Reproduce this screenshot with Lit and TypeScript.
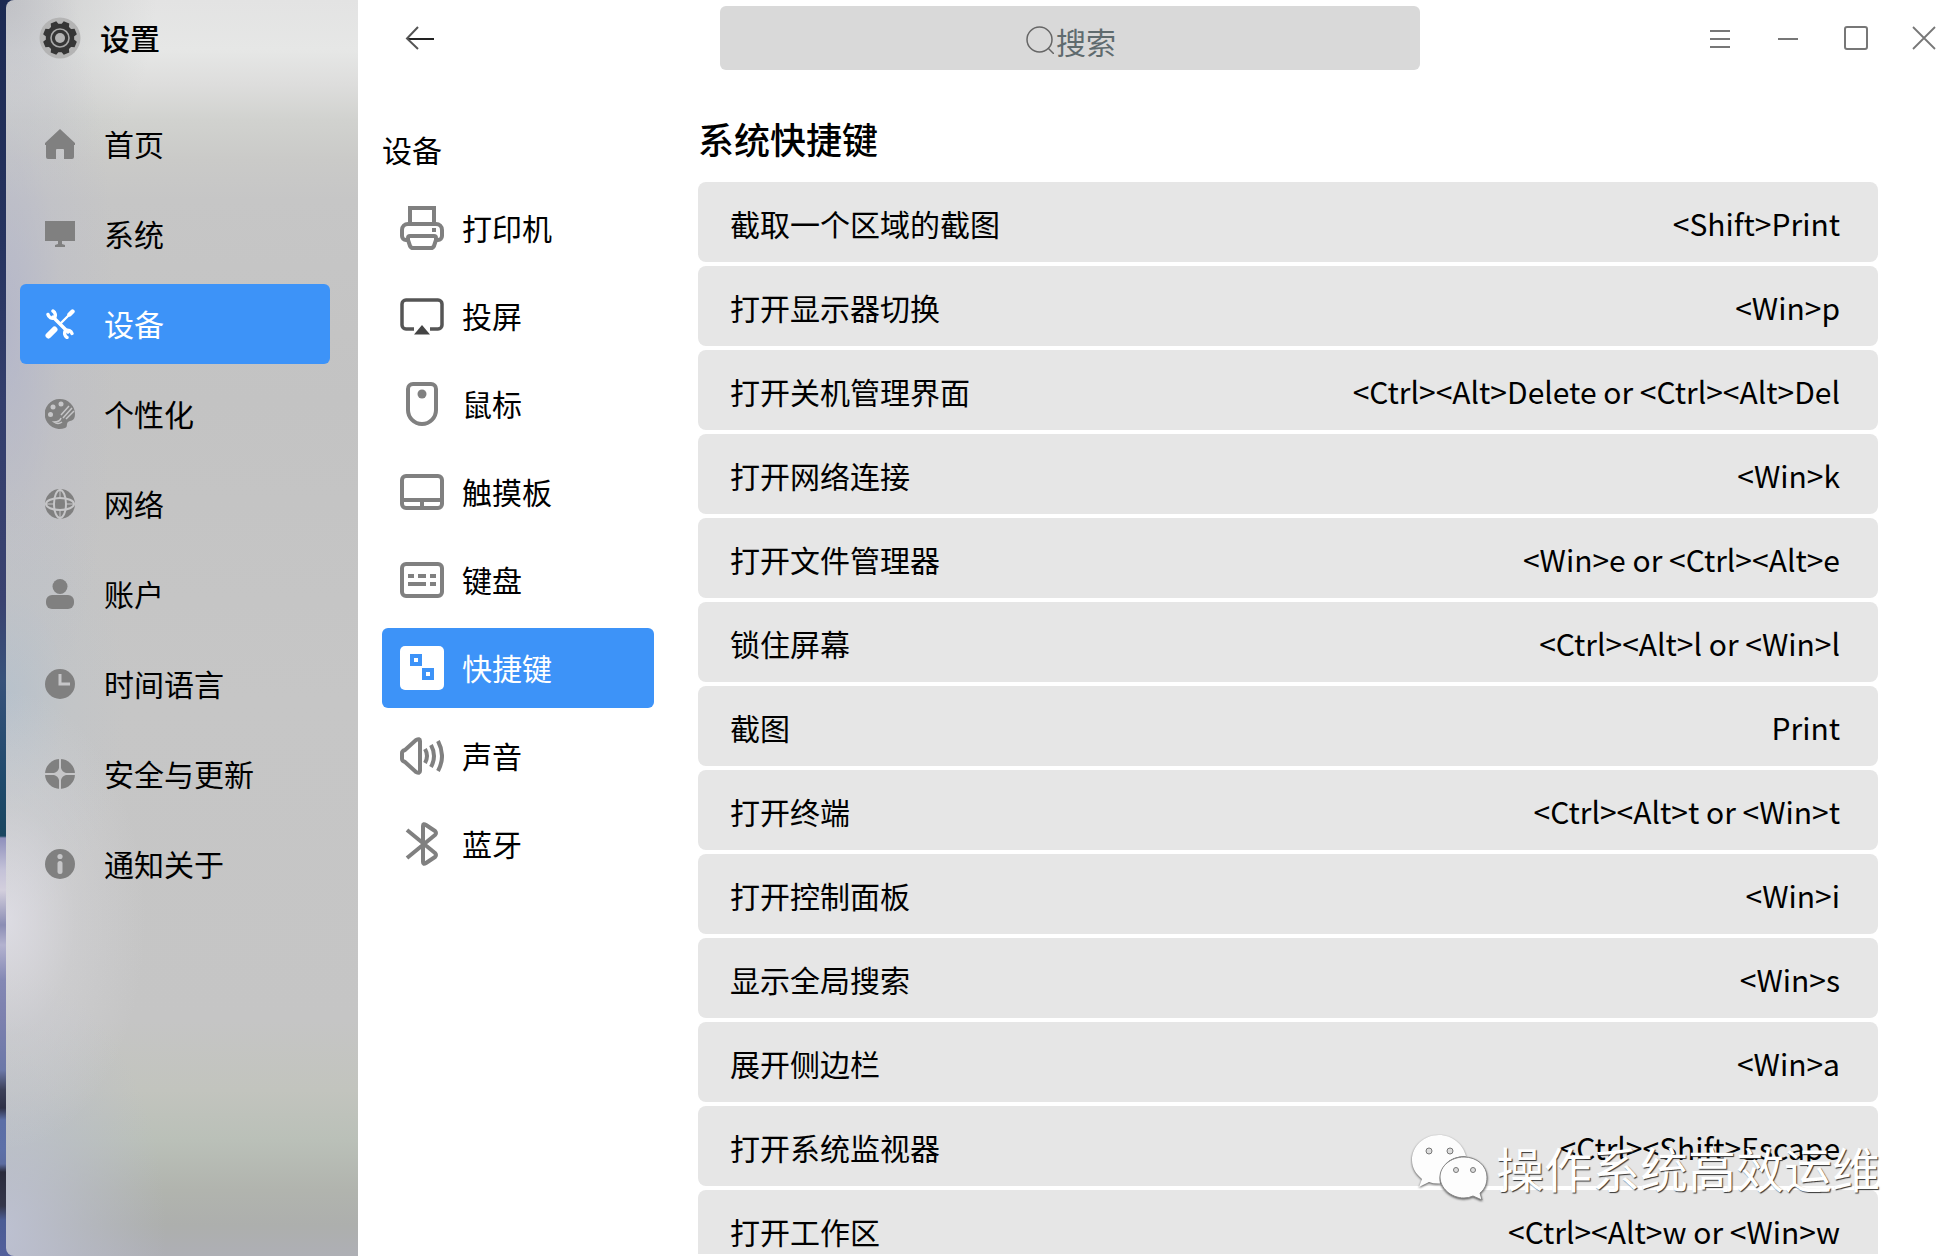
import { LitElement, html, css, svg, nothing, type TemplateResult } from "lit";
import { customElement, property } from "lit/decorators.js";
import { classMap } from "lit/directives/class-map.js";

interface NavItem {
  label: string;
  icon: TemplateResult;
  active?: boolean;
}

const categories: NavItem[] = [
  {
    label: "首页",
    icon: svg`<path fill="currentColor" d="M15 0 30 14v2h-1v12a2 2 0 0 1-2 2h-8v-9a1 1 0 0 0-1-1h-6a1 1 0 0 0-1 1v9H3a2 2 0 0 1-2-2V16H0v-2z"/>`,
  },
  {
    label: "系统",
    icon: svg`<path fill="currentColor" d="M0 2h30v20H0zM13 22h4v3l3 1v2H10v-2l3-1z"/>`,
  },
  {
    label: "设备",
    active: true,
    icon: svg`<g fill="none" stroke="currentColor" stroke-linecap="round">
      <path stroke-width="3.4" d="M8 8 23 23"/>
      <path stroke-width="3.400" d="M3 5.500a5 5 0 0 0 6.500 3.500a5 5 0 0 0-1.500-7"/>
      <path stroke-width="3.400" d="M27 24.500a5 5 0 0 0-6.500-3a5 5 0 0 0 1.500 7"/>
      <path stroke-width="2.400" d="M15 15 26 4"/>
      <path stroke-width="4.400" d="M24.500 5.500 27.500 2.500"/>
      <path stroke-width="6" d="M3.500 26.500 9.500 20.500"/>
    </g>`,
  },
  {
    label: "个性化",
    icon: svg`<path fill="currentColor" d="M15 0a15 15 0 1 0 5 29c3-1 1-4 3-6s7 0 7-8A15 15 0 0 0 15 0z"/>
      <g class="cut"><circle cx="8" cy="8" r="2.500"/><circle cx="16" cy="5" r="2.500"/><circle cx="5.500" cy="15.500" r="2.500"/></g>
      <g class="cutline thin"><path d="M24 7 16 16M27 9 18 19M29 12 21 20"/><path d="M16 19q-1 4-7 4q4 3 8 0"/></g>`,
  },
  {
    label: "网络",
    icon: svg`<circle cx="15" cy="15" r="15" fill="currentColor"/>
      <g class="cutline"><path d="M0 15h10M20 15h10M15 0v10M15 20v10" class="faint"/><ellipse cx="15" cy="15" rx="14" ry="6"/><ellipse cx="15" cy="15" rx="6" ry="14"/></g>
      <path fill="currentColor" d="M11 11h8v8h-8z"/>`,
  },
  {
    label: "账户",
    icon: svg`<circle cx="15" cy="7.500" r="7.500" fill="currentColor"/><rect x="1" y="16" width="28" height="14" rx="6" fill="currentColor"/>`,
  },
  {
    label: "时间语言",
    icon: svg`<circle cx="15" cy="15" r="15" fill="currentColor"/><path class="cutline wide" d="M15 5v10h10"/>`,
  },
  {
    label: "安全与更新",
    icon: svg`<circle cx="15" cy="15" r="15" fill="currentColor"/><path class="cut" d="M14 0h2v9q1 4 5 5h9v2h-9q-4 1-5 5v9h-2v-9q-1-4-5-5H0v-2h9q4-1 5-5z"/>`,
  },
  {
    label: "通知关于",
    icon: svg`<circle cx="15" cy="15" r="15" fill="currentColor"/><g class="cut"><circle cx="15" cy="7.500" r="2.600"/><rect x="12.500" y="12" width="5" height="13" rx="2.500"/></g>`,
  },
];

const devices: NavItem[] = [
  {
    label: "打印机",
    icon: svg`<g fill="none" stroke="currentColor" stroke-width="4">
      <path d="M10 17V2h24v15"/>
      <path d="M8 34H6a4 4 0 0 1-4-4v-6a6 6 0 0 1 6-6h28a6 6 0 0 1 6 6v6a4 4 0 0 1-4 4h-2"/>
      <path d="M8 33v-1q0-2 2-2h24q2 0 2 2v2l-2 6q-1 2-3 2H13q-2 0-3-2l-2-6z"/></g>
      <path fill="currentColor" d="M32 22h4v4h-4z"/>`,
  },
  {
    label: "投屏",
    icon: svg`<path fill="none" stroke="#555" stroke-width="3.500" d="M14 35H6a4 4 0 0 1-4-4V10a4 4 0 0 1 4-4h32a4 4 0 0 1 4 4v21a4 4 0 0 1-4 4h-8"/><path fill="#444" d="M22 31l8 9.500H14z"/>`,
  },
  {
    label: "鼠标",
    icon: svg`<path fill="none" stroke="currentColor" stroke-width="4" d="M8 7a5 5 0 0 1 5-5h18a5 5 0 0 1 5 5v21a14 14 0 0 1-28 0z"/><circle cx="22" cy="12" r="4.500" fill="currentColor"/>`,
  },
  {
    label: "触摸板",
    icon: svg`<g fill="none" stroke="currentColor" stroke-width="4"><rect x="2" y="6" width="40" height="32" rx="4"/><path d="M2 30h40M22 30v8"/></g>`,
  },
  {
    label: "键盘",
    icon: svg`<g fill="none" stroke="currentColor" stroke-width="4"><rect x="2" y="6" width="40" height="32" rx="4"/><path d="M8 18h6M18 18h8M30 18h6M8 26h18M30 26h6"/></g>`,
  },
  {
    label: "快捷键",
    active: true,
    icon: svg`<rect width="44" height="44" rx="5" fill="#fff"/><g fill="none" stroke="#3d93f8" stroke-width="4"><path d="M12 10h8v8h-8zM24 24h8v8h-8z"/></g>`,
  },
  {
    label: "声音",
    icon: svg`<g fill="none" stroke="currentColor" stroke-width="4" stroke-linejoin="round">
      <path d="M2 19q0-2 3-3L16 6q4-2 4 1v30q0 3-4 1L5 28q-3-1-3-3z"/>
      <path d="M25 15q4 7 0 14M31 11q6 11 0 22M38 7q8 15 0 30"/></g>`,
  },
  {
    label: "蓝牙",
    icon: svg`<path fill="none" stroke="currentColor" stroke-width="4" stroke-linejoin="round" d="M7 8 35 31q2 2 0 4l-9 6q-3 2-3-1V4q0-3 3-1l9 6q2 2 0 4L7 36"/>`,
  },
];

const shortcuts: [string, string][] = [
  ["截取一个区域的截图", "<Shift>Print"],
  ["打开显示器切换", "<Win>p"],
  ["打开关机管理界面", "<Ctrl><Alt>Delete or <Ctrl><Alt>Del"],
  ["打开网络连接", "<Win>k"],
  ["打开文件管理器", "<Win>e or <Ctrl><Alt>e"],
  ["锁住屏幕", "<Ctrl><Alt>l or <Win>l"],
  ["截图", "Print"],
  ["打开终端", "<Ctrl><Alt>t or <Win>t"],
  ["打开控制面板", "<Win>i"],
  ["显示全局搜索", "<Win>s"],
  ["展开侧边栏", "<Win>a"],
  ["打开系统监视器", "<Ctrl><Shift>Escape"],
  ["打开工作区", "<Ctrl><Alt>w or <Win>w"],
];

/* Vertical list of links, used for both navigation levels. */
@customElement("nav-list")
class NavList extends LitElement {
  @property({ attribute: false }) items: NavItem[] = [];
  @property({ type: Number }) iconSize = 30;
  @property({ reflect: true }) variant = "primary";

  static styles = css`
    :host {
      display: block;
    }
    .list {
      display: flex;
      flex-direction: column;
      gap: 10px;
      margin: 0;
      padding: 0;
      list-style: none;
    }
    .link {
      display: flex;
      align-items: center;
      box-sizing: border-box;
      gap: 29px;
      height: 80px;
      padding-left: 25px;
      border-radius: 6px;
      color: #000;
      text-decoration: none;
      font-size: 30px;
      line-height: 44px;
    }
    .label {
      padding-bottom: 2px;
    }
    .icon {
      flex: none;
      color: #808080;
    }
    .link.active {
      background: #3d93f8;
      color: #fff;
    }
    .active .icon {
      color: #fff;
    }
    :host([variant="secondary"]) .list {
      gap: 8px;
    }
    :host([variant="secondary"]) .link {
      gap: 18px;
      padding-left: 18px;
    }
    .cut {
      fill: #c6c6c8;
    }
    .cutline {
      fill: none;
      stroke: #c6c6c8;
      stroke-width: 2;
    }
    .cutline.wide {
      stroke-width: 3;
    }
    .cutline.thin {
      stroke-width: 1.5;
    }
    .faint {
      stroke-width: 1;
    }
  `;

  render() {
    return html`<ul class="list">
      ${this.items.map(
        (item) => html`<li>
          <a
            class=${classMap({ link: true, active: !!item.active })}
            href="#"
            aria-current=${item.active ? "page" : nothing}
          >
            <svg
              class="icon"
              width=${this.iconSize}
              height=${this.iconSize}
              viewBox="0 0 ${this.iconSize} ${this.iconSize}"
              aria-hidden="true"
            >
              ${item.icon}
            </svg>
            <span class="label">${item.label}</span>
          </a>
        </li>`
      )}
    </ul>`;
  }
}

@customElement("app-root")
class AppRoot extends LitElement {
  static styles = css`
    :host {
      display: block;
      position: relative;
      height: 100vh;
      overflow: hidden;
      background: #fff;
      color: #000;
      font-family: "Noto Sans CJK SC", sans-serif;
      font-size: 30px;
      line-height: 44px;
    }
    .window {
      display: grid;
      grid-template-columns: 358px minmax(0, 1fr);
      height: 100%;
    }
    .desktop {
      display: flex;
      padding-left: 6px;
      background: linear-gradient(
        #1c2a52 0,
        #26335f 240px,
        #333e6c 400px,
        #3a4270 600px,
        #38527a 680px,
        #1f4a6c 780px,
        #1a4660 836px,
        #8f90bc 838px,
        #c4c2d8 870px,
        #d3cfdd 890px,
        #8b8db4 925px,
        #b3b2cf 945px,
        #8488b4 980px,
        #7c80ae 1020px,
        #6c78a8 1070px,
        #3c4058 1090px,
        #2e3046 1108px,
        #5c6fa6 1120px,
        #5d70a8 1150px,
        #5c6ca0 1164px,
        #2a2b3c 1172px,
        #34364a 1206px,
        #4b5c94 1220px,
        #53609c 1256px
      );
    }
    .sidebar {
      box-sizing: border-box;
      flex: 1;
      padding: 16px 28px 0 14px;
      border-radius: 8px 0 0 8px;
      background: radial-gradient(
          140px 230px at 0 920px,
          rgba(226, 225, 234, 0.8),
          rgba(220, 220, 226, 0.3) 50%,
          rgba(210, 210, 214, 0)
        ),
        radial-gradient(
          160px 260px at 0 1230px,
          rgba(190, 194, 212, 0.9),
          rgba(186, 190, 204, 0.55) 50%,
          rgba(180, 184, 196, 0)
        ),
        radial-gradient(
          120px 220px at 0 700px,
          rgba(180, 192, 204, 0.8),
          rgba(186, 194, 202, 0.3) 50%,
          rgba(190, 196, 202, 0)
        ),
        radial-gradient(
          110px 420px at 0 330px,
          rgba(178, 181, 202, 0.85),
          rgba(184, 186, 202, 0.3) 50%,
          rgba(190, 192, 202, 0)
        ),
        radial-gradient(
          150px 200px at 0 0,
          rgba(190, 191, 194, 0.9),
          rgba(196, 198, 198, 0.4) 50%,
          rgba(200, 200, 200, 0)
        ),
        linear-gradient(
          #e3e3e3 0,
          #e6e7e6 50px,
          #dddddc 85px,
          #d1d2cf 120px,
          #cacac8 160px,
          #c6c6c6 200px,
          #c3c3c3 400px,
          #c6c6c6 700px,
          #c5c5c5 1020px,
          #c2c4be 1090px,
          #bac0b8 1140px,
          #b1b4ae 1190px,
          #adafad 1225px,
          #aeafb5 1256px
        );
    }
    .brand {
      display: flex;
      align-items: center;
      gap: 19px;
      height: 44px;
      margin: 0 0 44px;
      padding-left: 19px;
      font-size: 30px;
      font-weight: 500;
    }
    .name {
      padding-bottom: 2px;
    }
    .main {
      display: flex;
      flex-direction: column;
      min-width: 0;
      min-height: 0;
    }
    .titlebar {
      display: grid;
      grid-template-columns: 362px minmax(0, 700px) minmax(0, 1fr);
      align-items: center;
      height: 76px;
    }
    .tool {
      display: grid;
      place-items: center;
      width: 40px;
      height: 40px;
      padding: 0;
      border: 0;
      background: none;
      color: #777;
    }
    .back {
      margin-left: 42px;
      color: #222;
    }
    .search {
      display: flex;
      justify-content: center;
      align-items: center;
      box-sizing: border-box;
      gap: 2px;
      height: 64px;
      padding: 4px 0 0 2px;
      border-radius: 6px;
      background: #d9d9d9;
    }
    .query {
      width: 60px;
      height: 44px;
      padding: 2px 0 0;
      border: 0;
      outline: 0;
      background: none;
      color: #5f6b6e;
      font: inherit;
    }
    .query::placeholder {
      color: #5f6b6e;
      opacity: 1;
    }
    .controls {
      display: flex;
      justify-content: flex-end;
      gap: 28px;
    }
    .body {
      display: grid;
      grid-template-columns: 272px minmax(0, 1fr);
      gap: 44px;
      flex: 1;
      min-height: 0;
      padding: 0 66px 2px 24px;
    }
    .heading {
      margin: 51px 0 17px;
      font-size: 30px;
      font-weight: 400;
      line-height: 44px;
    }
    .content {
      display: flex;
      flex-direction: column;
      min-height: 0;
      overflow: hidden;
    }
    .title {
      flex: none;
      margin: 36px 0 18px;
      font-size: 36px;
      font-weight: 500;
      line-height: 52px;
    }
    .shortcuts {
      display: flex;
      flex-direction: column;
      gap: 4px;
      margin: 0;
      padding: 0;
      list-style: none;
    }
    .shortcut {
      display: flex;
      flex: none;
      justify-content: space-between;
      align-items: center;
      box-sizing: border-box;
      height: 80px;
      padding: 2px 38px 0 32px;
      border-radius: 8px;
      background: #e6e6e6;
    }
    .watermark {
      position: absolute;
      right: 64px;
      bottom: 56px;
      display: flex;
      align-items: center;
      gap: 8px;
      color: #fff;
      font-size: 48px;
      font-weight: 400;
      line-height: 64px;
      text-shadow: 1px 1px 1px #333;
      pointer-events: none;
    }
    .bubble {
      filter: drop-shadow(0 1px 1px #555);
    }
  `;

  render() {
    return html`
      <div class="window">
        <div class="desktop">
          <aside class="sidebar">
            <h1 class="brand">
              <svg width="42" height="42" viewBox="0 0 42 42" aria-hidden="true">
                <circle cx="21" cy="21" r="20.500" fill="#b4b4b4" />
                <circle cx="21" cy="21" r="14.200" fill="#363636" />
                <g fill="#363636">
                  ${[22.5, 67.5, 112.5, 157.5, 202.5, 247.5, 292.5, 337.5].map(
                    (angle) =>
                      svg`<path d="M16.500 9 18 4h6L25.500 9z" transform="rotate(${angle} 21 21)"/>`
                  )}
                </g>
                <circle cx="21" cy="21" r="9" fill="none" stroke="#a8a8a8" stroke-width="1.600" />
                <circle cx="21" cy="21" r="5" fill="#b4b4b4" />
              </svg>
              <span class="name">设置</span>
            </h1>
            <nav aria-label="设置">
              <nav-list .items=${categories}></nav-list>
            </nav>
          </aside>
        </div>

        <main class="main">
          <header class="titlebar">
            <button class="tool back" type="button" aria-label="返回">
              <svg width="30" height="24" viewBox="0 0 30 24" fill="none" stroke="currentColor" stroke-width="2">
                <path d="M29 13H2" /><path stroke="#555" d="M13 1 2 12.500 13 23" />
              </svg>
            </button>
            <label class="search">
              <svg width="28" height="28" viewBox="0 0 28 28" fill="none" stroke="#666" stroke-width="1.500" aria-hidden="true">
                <circle cx="13.500" cy="13.500" r="12.500" />
                <path d="M22 22l6 6" />
              </svg>
              <input class="query" type="text" placeholder="搜索" aria-label="搜索" />
            </label>
            <div class="controls">
              <button class="tool" type="button" aria-label="菜单">
                <svg width="20" height="20" viewBox="0 0 20 20" stroke="currentColor" stroke-width="2">
                  <path d="M0 3h20M0 11h20M0 19h20" />
                </svg>
              </button>
              <button class="tool" type="button" aria-label="最小化">
                <svg width="20" height="20" viewBox="0 0 20 20" stroke="currentColor" stroke-width="2">
                  <path d="M0 11h20" />
                </svg>
              </button>
              <button class="tool" type="button" aria-label="最大化">
                <svg width="24" height="24" viewBox="0 0 24 24" fill="none" stroke="currentColor" stroke-width="2">
                  <rect x="1" y="1" width="22" height="22" rx="2" />
                </svg>
              </button>
              <button class="tool" type="button" aria-label="关闭">
                <svg width="24" height="24" viewBox="0 0 24 24" stroke="currentColor" stroke-width="1.800">
                  <path d="M1 1l22 22M23 1 1 23" />
                </svg>
              </button>
            </div>
          </header>

          <div class="body">
            <nav aria-label="设备">
              <h2 class="heading">设备</h2>
              <nav-list variant="secondary" .iconSize=${44} .items=${devices}></nav-list>
            </nav>
            <section class="content">
              <h2 class="title">系统快捷键</h2>
              <ul class="shortcuts">
                ${shortcuts.map(
                  ([name, keys]) => html`<li class="shortcut">
                    <span>${name}</span><span>${keys}</span>
                  </li>`
                )}
              </ul>
            </section>
          </div>
        </main>
      </div>

      <div class="watermark">
        <svg class="bubble" width="76" height="66" viewBox="0 0 76 66" aria-hidden="true">
          <path fill="#fdfdfd" d="M27 1C12 1 0 12 0 26c0 8 4 14 10 19l-3 8 10-5q5 2 11 1.500C26 34 36 22 54 22 51 10 40 1 27 1z" />
          <path fill="#fdfdfd" stroke="#888" stroke-width="1" d="M52 23c-13 0-24 9-24 20s11 21 24 21q5 0 9-2l9 4-2-7c5-4 7-9 7-16 0-11-10-20-23-20z" />
          <g fill="#ddd" stroke="#777" stroke-width="1">
            <circle cx="17" cy="17" r="3" /><circle cx="38" cy="17" r="3" />
            <circle cx="44" cy="36" r="2.500" /><circle cx="61" cy="36" r="2.500" />
          </g>
        </svg>
        <span>操作系统高效运维</span>
      </div>
    `;
  }
}
